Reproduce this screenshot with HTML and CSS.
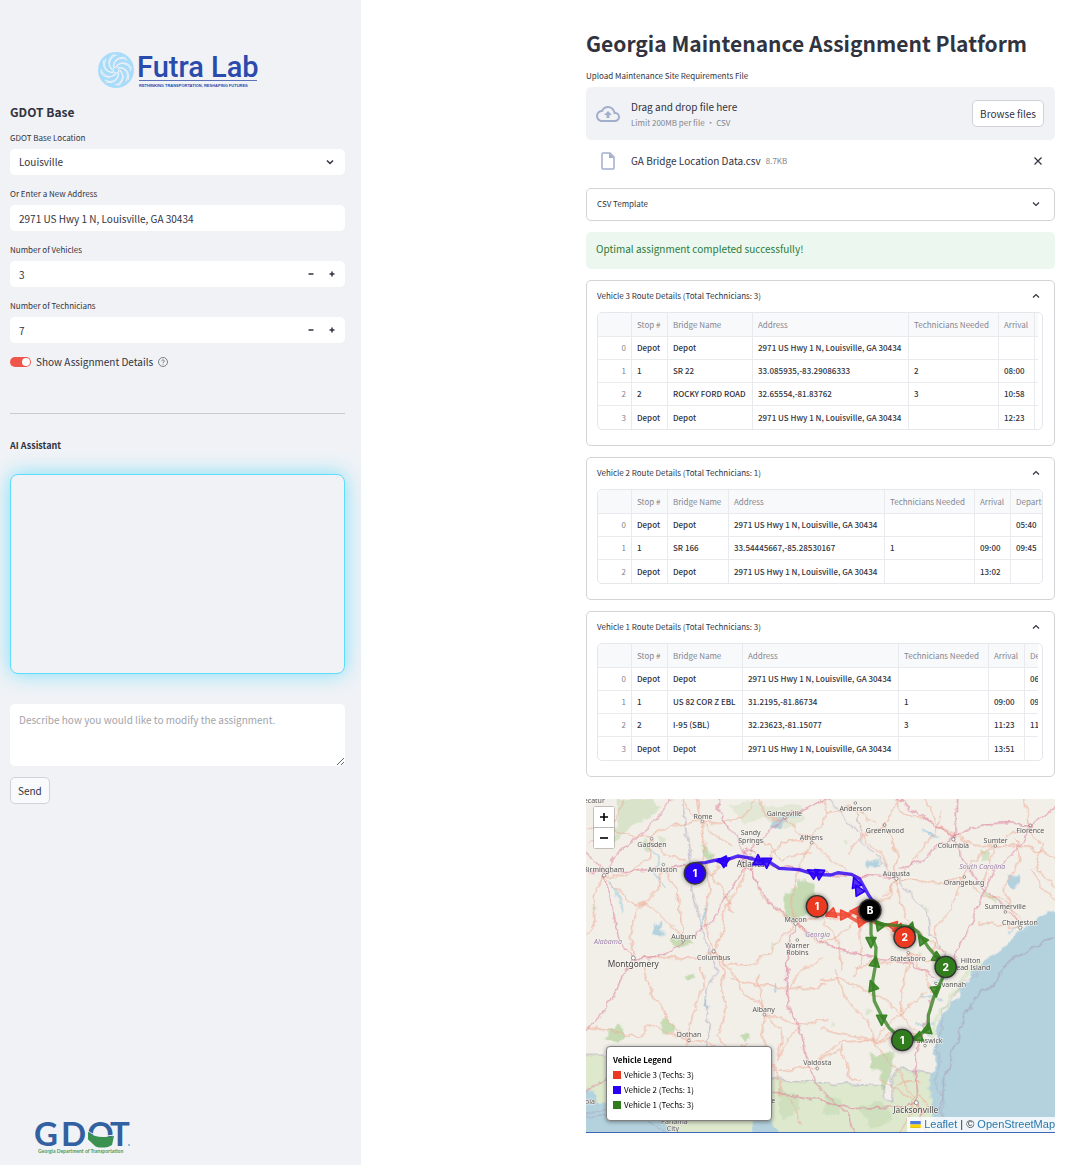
FILE: index.html
```html
<!DOCTYPE html>
<html lang="en">
<head>
<meta charset="utf-8">
<title>Georgia Maintenance Assignment Platform</title>
<link rel="stylesheet" href="styles.css">
</head>
<body>
<div class="app">
  <aside class="sidebar">
    <svg class="futra-logo" viewBox="0 0 160 38" role="img" aria-label="Futra Lab">
      <circle cx="18" cy="19" r="18" fill="#a9dcfa"/>
      <g fill="none" stroke="#f0f2f6" stroke-width="1">
        <g id="swirl"><path d="M18 15c6-5 13-2 15 5"/><path d="M21 17c8-1 11 6 9 12"/></g>
        <use href="#swirl" transform="rotate(45 18 19)"/>
        <use href="#swirl" transform="rotate(90 18 19)"/>
        <use href="#swirl" transform="rotate(135 18 19)"/>
        <use href="#swirl" transform="rotate(180 18 19)"/>
        <use href="#swirl" transform="rotate(225 18 19)"/>
        <use href="#swirl" transform="rotate(270 18 19)"/>
        <use href="#swirl" transform="rotate(315 18 19)"/>
        <circle cx="18" cy="19" r="3"/>
      </g>
      <text class="futra-name" x="39" y="26">Futra Lab</text>
      <path d="M41 29.500H159" stroke="#5a73bb" stroke-width="1"/>
      <text class="futra-tag" x="41" y="36">RETHINKING TRANSPORTATION, RESHAPING FUTURES</text>
    </svg>

    <h2 class="side-title">GDOT Base</h2>

    <div class="field">
      <label for="base">GDOT Base Location</label>
      <div class="control">
        <select id="base"><option>Louisville</option></select>
        <svg class="chevron" viewBox="0 0 10 10"><path d="M2 3.500l3 3 3-3"/></svg>
      </div>
    </div>
    <div class="field">
      <label for="address">Or Enter a New Address</label>
      <div class="control"><input id="address" type="text" value="2971 US Hwy 1 N, Louisville, GA 30434"></div>
    </div>
    <div class="field">
      <label for="vehicles">Number of Vehicles</label>
      <div class="control">
        <input id="vehicles" type="number" value="3">
        <button class="step" type="button" aria-label="Fewer vehicles"><svg viewBox="0 0 8 8"><path d="M1.500 4h5"/></svg></button>
        <button class="step" type="button" aria-label="More vehicles"><svg viewBox="0 0 8 8"><path d="M1.500 4h5M4 1.500v5"/></svg></button>
      </div>
    </div>
    <div class="field">
      <label for="techs">Number of Technicians</label>
      <div class="control">
        <input id="techs" type="number" value="7">
        <button class="step" type="button" aria-label="Fewer technicians"><svg viewBox="0 0 8 8"><path d="M1.500 4h5"/></svg></button>
        <button class="step" type="button" aria-label="More technicians"><svg viewBox="0 0 8 8"><path d="M1.500 4h5M4 1.500v5"/></svg></button>
      </div>
    </div>
    <div class="toggle-row">
      <input class="toggle" id="details" type="checkbox" checked>
      <label for="details">Show Assignment Details</label>
      <svg class="help" viewBox="0 0 10 10"><circle cx="5" cy="5" r="4.500"/><path d="M3.700 4.200c0-1.800 2.700-1.700 2.600 0 0 .8-1.300.8-1.300 1.900M5 7v.8"/></svg>
    </div>

    <hr class="rule">

    <h3 class="chat-title">AI Assistant</h3>
    <div class="chat-log"></div>
    <textarea class="prompt" aria-label="Message" placeholder="Describe how you would like to modify the assignment."></textarea>
    <button class="button" type="button">Send</button>

    <svg class="gdot-logo" viewBox="0 0 96 34" role="img" aria-label="GDOT, Georgia Department of Transportation">
      <text class="gdot-name" x="-1" y="24">G</text>
      <text class="gdot-name" x="26" y="24">D</text>
      <text class="gdot-name" x="52" y="24">O</text>
      <text class="gdot-name" x="75" y="24">T</text>
      <path d="M53 10c5 5 14 6 26 4l-2 9-4 2c-6 1-12 1-14-2-3-4-7-5-6-7z" fill="#3b9150"/>
      <path d="M53 9c6 5 15 6 26 4" fill="none" stroke="#f0f2f6" stroke-width="1"/>
      <text class="gdot-tag" x="3" y="31">Georgia Department of Transportation</text>
      <circle cx="94" cy="23" r="1" fill="#86a5cc"/>
    </svg>
  </aside>

  <main class="main">
    <h1>Georgia Maintenance Assignment Platform</h1>
    <label class="upload-label" for="upload">Upload Maintenance Site Requirements File</label>
    <div class="dropzone">
      <svg class="cloud" viewBox="0 0 24 24"><path d="M19.350 10.040A7.490 7.490 0 0 0 12 4C9.110 4 6.600 5.640 5.350 8.040A5.994 5.994 0 0 0 0 14c0 3.310 2.690 6 6 6h13c2.760 0 5-2.240 5-5 0-2.640-2.050-4.780-4.650-4.960zM19 18H6c-2.210 0-4-1.790-4-4 0-2.050 1.530-3.760 3.560-3.970l1.070-.11.5-.95A5.469 5.469 0 0 1 12 6c2.620 0 4.880 1.860 5.390 4.430l.3 1.500 1.530.11A2.980 2.980 0 0 1 22 15c0 1.650-1.350 3-3 3zM8 13h2.550v3h2.900v-3H16l-4-4z"/></svg>
      <div class="drop-text">
        <span>Drag and drop file here</span>
        <small>Limit 200MB per file • CSV</small>
      </div>
      <button class="button" id="upload" type="button">Browse files</button>
    </div>
    <div class="file">
      <svg class="doc" viewBox="0 0 14 18"><path d="M2 1h7l4 4v11q0 1-1 1H2q-1 0-1-1V2q0-1 1-1z"/><path class="fold" d="M8 1l5 5H8z"/></svg>
      <span>GA Bridge Location Data.csv</span>
      <small>8.7KB</small>
      <button class="remove" type="button" aria-label="Remove file"><svg viewBox="0 0 10 10"><path d="M1.500 1.500l7 7M8.500 1.500l-7 7"/></svg></button>
    </div>

    <details class="card">
      <summary>CSV Template <svg class="chevron" viewBox="0 0 10 10"><path d="M2 3.500l3 3 3-3"/></svg></summary>
    </details>

    <p class="alert" role="status">Optimal assignment completed successfully!</p>

    <details class="card" open>
      <summary>Vehicle 3 Route Details (Total Technicians: 3) <svg class="chevron" viewBox="0 0 10 10"><path d="M2 6.500l3-3 3 3"/></svg></summary>
      <div class="grid inset"><div class="scroll">
        <table>
          <colgroup><col class="c-index"><col class="c-stop"><col class="c-bridge-l"><col class="c-address"><col class="c-tech"><col class="c-time"><col class="c-depart"></colgroup>
          <thead><tr><th></th><th>Stop #</th><th>Bridge Name</th><th>Address</th><th>Technicians Needed</th><th>Arrival</th><th></th></tr></thead>
          <tbody>
            <tr><th>0</th><td>Depot</td><td>Depot</td><td>2971 US Hwy 1 N, Louisville, GA 30434</td><td></td><td></td><td></td></tr>
            <tr><th>1</th><td>1</td><td>SR 22</td><td>33.085935,-83.29086333</td><td>2</td><td>08:00</td><td></td></tr>
            <tr><th>2</th><td>2</td><td>ROCKY FORD ROAD</td><td>32.65554,-81.83762</td><td>3</td><td>10:58</td><td></td></tr>
            <tr><th>3</th><td>Depot</td><td>Depot</td><td>2971 US Hwy 1 N, Louisville, GA 30434</td><td></td><td>12:23</td><td></td></tr>
          </tbody>
        </table>
      </div></div>
    </details>

    <details class="card" open>
      <summary>Vehicle 2 Route Details (Total Technicians: 1) <svg class="chevron" viewBox="0 0 10 10"><path d="M2 6.500l3-3 3 3"/></svg></summary>
      <div class="grid"><div class="scroll">
        <table>
          <colgroup><col class="c-index"><col class="c-stop"><col class="c-bridge-s"><col class="c-address"><col class="c-tech"><col class="c-time"><col class="c-depart"></colgroup>
          <thead><tr><th></th><th>Stop #</th><th>Bridge Name</th><th>Address</th><th>Technicians Needed</th><th>Arrival</th><th>Departure</th></tr></thead>
          <tbody>
            <tr><th>0</th><td>Depot</td><td>Depot</td><td>2971 US Hwy 1 N, Louisville, GA 30434</td><td></td><td></td><td>05:40</td></tr>
            <tr><th>1</th><td>1</td><td>SR 166</td><td>33.54445667,-85.28530167</td><td>1</td><td>09:00</td><td>09:45</td></tr>
            <tr><th>2</th><td>Depot</td><td>Depot</td><td>2971 US Hwy 1 N, Louisville, GA 30434</td><td></td><td>13:02</td><td></td></tr>
          </tbody>
        </table>
      </div></div>
    </details>

    <details class="card" open>
      <summary>Vehicle 1 Route Details (Total Technicians: 3) <svg class="chevron" viewBox="0 0 10 10"><path d="M2 6.500l3-3 3 3"/></svg></summary>
      <div class="grid inset"><div class="scroll">
        <table>
          <colgroup><col class="c-index"><col class="c-stop"><col class="c-bridge-m"><col class="c-address"><col class="c-tech"><col class="c-time"><col class="c-depart"></colgroup>
          <thead><tr><th></th><th>Stop #</th><th>Bridge Name</th><th>Address</th><th>Technicians Needed</th><th>Arrival</th><th>Departure</th></tr></thead>
          <tbody>
            <tr><th>0</th><td>Depot</td><td>Depot</td><td>2971 US Hwy 1 N, Louisville, GA 30434</td><td></td><td></td><td>06:20</td></tr>
            <tr><th>1</th><td>1</td><td>US 82 COR Z EBL</td><td>31.2195,-81.86734</td><td>1</td><td>09:00</td><td>09:45</td></tr>
            <tr><th>2</th><td>2</td><td>I-95 (SBL)</td><td>32.23623,-81.15077</td><td>3</td><td>11:23</td><td>11:53</td></tr>
            <tr><th>3</th><td>Depot</td><td>Depot</td><td>2971 US Hwy 1 N, Louisville, GA 30434</td><td></td><td>13:51</td><td></td></tr>
          </tbody>
        </table>
      </div></div>
    </details>

    <section class="map" aria-label="Route map">
      <svg class="tiles" viewBox="3 11 1407 999" preserveAspectRatio="xMidYMid slice">
        <defs>
          <!-- gives drawn terrain and roads an irregular, natural line -->
          <filter id="rough" filterUnits="userSpaceOnUse" x="-40" y="-30" width="1500" height="1090">
            <feTurbulence type="fractalNoise" baseFrequency=".03" numOctaves="3" seed="4"/>
            <feDisplacementMap in="SourceGraphic" scale="26" xChannelSelector="R" yChannelSelector="G"/>
          </filter>
          <path id="arrow" d="M0-17L15 13H-15z"/>
        </defs>
        <rect x="-20" y="-20" width="1460" height="1070" fill="#f2efe9"/>
        <g filter="url(#rough)">
        <!-- Florida lowlands -->
        <path d="M-20 780H90L560 850 705 862 895 872 895 912 923 915 925 840 945 818 1040 835 1060 1050H-20z" fill="#dde8cd"/>
        <!-- forests -->
        <g fill="#c6dbb4">
          <path d="M640 248l25 4 30 38-5 60-40 10-25 22-28-18 2-70 38-20z"/>
          <path d="M855 778h40l32-12-5 75-30 50-8-8 5-55-36-5z"/>
          <path d="M95 12l100 0 30 25-30 30-50 20-35 30-20 30-10-20 20-40z" opacity=".6"/>
          <path d="M430 30l60-10 60 15 100-10 5 50-50 30-70-40-60 20z" opacity=".35"/>
          <path d="M225 680l20-10 28 20-5 25-30 2zM65 705l35-15 25 30-30 20-32-5zM305 540l20-5 5 15-20 5zM468 720l15-8 15 12-20 18zM255 430l50-5 25 20-50 15zM350 150l40 25-10 25-25-20z"/>
          <path d="M705 295l5 60-25 15zM1188 165l20 5 5 30-20-5zM1195 285l40 25-5 15-35-25zM165 150l15-20 20 30-15 10z" opacity=".7"/>
          <path d="M580 880l50 15 20 50-60 30zM720 900l50 10-10 50-50-10zM820 930l70-10 40 50-70 30z" opacity=".6"/>
          <path d="M220 120l20 10-10 20zM20 330l20 8-15 20zM420 300l16 5-10 16zM560 440l18 6-14 14zM780 130l15 5-8 15zM1020 330l20 8-16 12zM840 640l20 5-14 14zM1000 470l18 4-8 18zM740 680l12 6-10 12z" opacity=".5"/>
        </g>
        <!-- ocean, gulf and lakes -->
        <g fill="#b4d2de">
          <path d="M1450 342l-40 8-45 10-10 22-20 3-15 22-20 3-20 30-35 20-12 22-35 12-15 25-28 5-5 32-30 22 5 30-30 12-12 30-20 20-8 35 6 20-15 45 10 35-20 40-2 45 10 50 7 130h410z"/>
          <path d="M-20 890h48l10 20-3 5 60 15 130 25 60 95H-20zM505 955l50 15 50 80H500z"/>
          <path d="M565 70l25-10 10 15-20 25-25-5zM210 390l20-15-5 25 15 15-20 10-20-15zM1265 245l35-8 5 20-15 25-20-15zM1005 105l35 8 25 15-40-5zM835 206l45-15 10 18-45 8zM355 340l12-5-12 40-6 20zM358 600l8 5 2 40-6-5zM570 560l8 0 2 30-6-2z"/>
        </g>
        <g fill="none" stroke="#b4d2de" stroke-width="4">
          <path d="M75 250l30 60 10 50M190 150l30 45-8 40 25 40M580 80l60-20M700 300l25 40M1040 560l40-5M1010 600l60 10M1000 690l50-5M1020 700l30 30M1040 480l60 20M1300 390l-30 20M815 60l15 50M350 400l12-60 10-20"/>
        </g>
        <g fill="none" stroke="#dde8cd" stroke-width="9" stroke-linejoin="round">
          <path d="M1190 495l-45 35-20 25-10 30-22 20-10 25-28 35-8 25 6 20-12 40"/>
        </g>
        <g fill="none" stroke="#a9a2bd" stroke-width="3" opacity=".8">
          <path d="M1410 425l-30 10-20 20-40 15-40 25-25 15-20 50-50 30-40 60-15 30-12 60-18 20-8 60-20 30 2 50-10 30 12 50-5 35 14 40" stroke-width="4"/>
          <path d="M1180 530l-50 30-30 50-25 30-5 60-15 60 10 40-15 60 20 45 20 120" stroke-width="2"/>
          <path d="M3 955l60-15 120 25 60 49M3 965l80-10"/>
          <path d="M290 -10l18 167 17 140 25 105 8 35 25 50 12 35 5 12-35 40-4 40 2 60 12 22-8 44-2 40"/>
          <path d="M705 -10l75 72 40 60 65 70 50 50 40 55 50 50 10 70 40 50 10 40"/>
          <path d="M-10 780h73M560 850l145 12 190 10v35l25 10 5-77 20-22 95 17"/>
        </g>
        <!-- secondary roads -->
        <g fill="none" stroke="#efae98" stroke-width="3">
          <path d="M3 150l60-40 40-60 30-58M3 100l80 10 110 15 60-30 80-20 80 10 60-20 70-83M200 130l-10 60-60 50-73 0M200 130l40 50 60 15M350 78l-40-40-30-46M350 78l10 60-10 60M350 78l50 50 40 20M330-8l15 80"/>
          <path d="M235 215l-20 70-60 60-20 80 12 60M235 215l40 70 15 80 5 70M360 200l15 80-15 60 5 60 20 70M360 200l50 80 30 70M55 240l-30 60 5 90-27 30M55 240l80 80 70 20 90 90"/>
          <path d="M490 200l-30 80-40 60-10 70-22 60M500 210l30 90 60 60 42 22M545 200l40-60 90-10 25-30 30-50M680 140l-30 60-20 60-10 60 15 60M680 140l50 50 60 40M600 60l30 40 50 40M520-8l20 70 50 10M530 130l60 60 90-20M700-8l30 60 80-20 60 60"/>
          <path d="M388 468l40 40 70 0 60-40 75-85M388 468l-60 20-180 0M388 468l30 60-10 60 15 60-25 70 40 60-30 50M388 468l60 70 30 60 50 30 20 40M440 548l80 20 90 12 120-10M520 540l5 70 20 50"/>
          <path d="M540 655l-10 60 20 70 30 60 5 60M540 655l60 20 60 15 70-20M545 660l50 60-20 80M610 580l40-60 60-30M650 690l-40 40-30 60M310 735l-60-20-60-30-30 40-60-15-97-15M310 735l20-100 25-60-5-60M310 735l60 10 60 20 60-20M310 735v50M178 512l25 100 25 20 20 40 60 60M580 825l50-5 60 0 20-30 60-30"/>
          <path d="M635 385l60-20 60 10 90-30M635 385l60 60 60-20 95-80M855 345l-40 80 20 60-30 60M855 345l60-60 20-45M855 345l60 70 50 50M930 250l-20 60-60 30M930 250l20 60 10 60 60 60 60 40M930 250l-40-70-60-60-20-90M950 240l40-50 60-80 20-60M899 90l30-60 40-38M899 90l40 90-10 60M899 90l-80 40-30 50"/>
          <path d="M1135 245l-60 20-60-10-70-5M1135 245l30-50 65-45 40-30 60-20M1135 245l-30 80-50 70-10 80M1135 245l60 60 50 0 60 60M1230 155l-20 60-15 50M1230 155l100 0 80 30M1330 95l40 60-20 60 60 60M1330 95l-10-105M1110 120l-50-30-50-98M1105 120l60 30 60 0M1305 395l-30-60-20-60 50-80-10-60M1180 380l60 10 60 5M1340 220l30 60 40 30M920-8l30 60 80 20 70 50"/>
          <path d="M970 475l-50 30-50-10-60 30M970 475l60 20 50 20M970 475l-10 70-15 110M970 475l50 60 20 60M705 560l60-10 80 40 60 30 40 30 30 40 25 25M705 700l80 20 80 15 80-85 80-60M865 735l-20-60-60-60-40-90M865 735l40 60 40 40 20 50 30 30M705 790l60-50 100-5M765 750l30 100 30 5M865 735l80 0 70 0M1010 720l-60-10-80 25M770 520l-10-80-40-60M1000 925l-30 40-30 66M1000 925l-60-40-60-40M1010 860l-60 0-30 30M990 900l20 0 15 25-15 25-30-10-5-25zM585 880l40 50 30 60M380 185l20 30-15 30-50-40"/>
        </g>
        <!-- interstates -->
        <g fill="none" stroke="#dc7d99" stroke-width="3" stroke-linejoin="round">
          <path d="M-10 225l65 5 95-2 85-13 95-10 90-12 60-6 20-2M55 230l45-60 50-40 50-45 40-45 30-50M55 230l-52-60M55 240l20 60 15 90 12 40 28 42 15 16M145 488l65 2 85-50 55-35 50-55 30-60 52-75M145 488l-30 50-25 50-40 70-60 55"/>
          <path d="M485 190l-25-60-30-30-30-50v-60M490 175l40-45 60-60 50-20 60-30 70-30M495 210l25 60 40 60 60 45 15 15-25 50-5 70v120l35 65 20 80 30 90 50 50 50 45 35 100M497 205l100 12 120 18 90 5 120 5M470 170l20-10 25 15 5 30-25 20-25-15z"/>
          <path d="M945 225l60-30 50-40 50-30 80-35 80-5 70 5 85-60M635 385l60 50 100 35 95 20 75 10 40 20 50 25M905-8l130 83 70 50 40 85 50 70 50 40 60 70M1112-10l-2 135"/>
          <path d="M1345 80l-40 70-80 80-30 60-30 80-40 80-30 75-20 15-30 70-30 90-25 100 5 110 30 120M705 915l90 25 130-5 70-10M560 888l145 27M3 895l60-50"/>
        </g>
        </g>
        <!-- place names -->
        <g class="places">
          <g class="dots"><circle cx="352" cy="78" r="4"/><circle cx="200" cy="130" r="4"/><circle cx="235" cy="208" r="4"/><circle cx="57" cy="240" r="5"/><circle cx="600" cy="67" r="4"/><circle cx="680" cy="142" r="4"/><circle cx="632" cy="385" r="5"/><circle cx="637" cy="434" r="4"/><circle cx="295" cy="436" r="4"/><circle cx="386" cy="468" r="5"/><circle cx="145" cy="488" r="6"/><circle cx="811" cy="23" r="4"/><circle cx="899" cy="89" r="4"/><circle cx="1105" cy="132" r="5"/><circle cx="1231" cy="152" r="4"/><circle cx="1336" cy="90" r="4"/><circle cx="1138" cy="245" r="4"/><circle cx="1261" cy="350" r="4"/><circle cx="1306" cy="397" r="5"/><circle cx="934" cy="250" r="5"/><circle cx="970" cy="472" r="4"/><circle cx="538" cy="658" r="4"/><circle cx="312" cy="735" r="4"/><circle cx="697" cy="820" r="4"/><circle cx="1020" cy="751" r="4"/><circle cx="994" cy="922" r="6"/><circle cx="497" cy="189" r="6"/></g>
          <text x="28" y="23">ecatur</text>
          <text x="354" y="70">Rome</text><text x="598" y="61">Gainesville</text>
          <text x="497" y="119">Sandy</text><text x="497" y="142">Springs</text>
          <text x="679" y="135">Athens</text><text x="201" y="154">Gadsden</text>
          <text x="56" y="230">Birmingham</text><text x="232" y="230">Anniston</text>
          <text class="city" x="497" y="214">Atlanta</text>
          <text x="632" y="379">Macon</text><text x="637" y="457">Warner</text><text x="637" y="480">Robins</text>
          <text x="296" y="430">Auburn</text><text x="386" y="493">Columbus</text>
          <text class="city" x="145" y="516">Montgomery</text>
          <text x="811" y="47">Anderson</text><text x="900" y="114">Greenwood</text>
          <text x="1105" y="158">Columbia</text><text x="1232" y="144">Sumter</text><text x="1336" y="112">Florence</text>
          <text x="1137" y="269">Orangeburg</text><text x="1261" y="341">Summerville</text><text x="1305" y="390">Charleston</text>
          <text x="934" y="243">Augusta</text><text x="969" y="496">Statesboro</text>
          <text x="1157" y="502">Hilton</text><text x="1157" y="525">Head Island</text><text x="1095" y="575">Savannah</text>
          <text x="1022" y="742">Brunswick</text><text x="536" y="650">Albany</text><text x="312" y="726">Dothan</text>
          <text x="697" y="809">Valdosta</text><text class="city" x="992" y="954">Jacksonville</text>
          <text x="268" y="985">Panama</text><text x="264" y="1007">City</text>
          <text x="514" y="922">Tallahassee</text><text x="-20" y="926">Pensacola</text>
          <g class="state"><text x="69" y="446">Alabama</text><text x="698" y="424">Georgia</text><text x="1192" y="221">South Carolina</text></g>
        </g>
        <!-- vehicle routes -->
        <g class="route blue">
          <path d="M330 205l30-3 40-9 20 2 38-13 30 5 40 10 20 0 35 22 60 4 45 14 50 2 22-7 40 5 24 14 12 22 14 25 20 30"/>
          <use href="#arrow" transform="translate(411 197) rotate(-90)"/><use href="#arrow" transform="translate(420 197) rotate(60)"/>
          <use href="#arrow" transform="translate(519 195)"/><use href="#arrow" transform="translate(545 202) rotate(180)"/>
          <use href="#arrow" transform="translate(682 232) rotate(-60)"/><use href="#arrow" transform="translate(703 237) rotate(185)"/>
          <use href="#arrow" transform="translate(812 262) rotate(-20)"/><use href="#arrow" transform="translate(820 284) rotate(-30)"/>
        </g>
        <g class="route red">
          <path d="M696 333l30 20 50 6 40-10 38-4M790 362l30 18 35-5 30 12 40 2 34 30"/>
          <use href="#arrow" transform="translate(738 356) rotate(-110)"/><use href="#arrow" transform="translate(780 359) rotate(90)"/>
          <use href="#arrow" transform="translate(812 348) rotate(-90)"/><use href="#arrow" transform="translate(832 378) rotate(80)"/><use href="#arrow" transform="translate(922 391) rotate(-80)"/><use href="#arrow" transform="translate(942 400) rotate(20)"/>
        </g>
        <g class="route green">
          <path d="M855 345l20 38 15 5 60 3 30 5 20 15 30 45 30 35 22 24-12 40-20 40-20 65 0 40-36 25-42 9-40-37-22-35-22-45-5-60 7-40 3-60-15-40v-60"/>
          <use href="#arrow" transform="translate(888 390) rotate(80)"/><use href="#arrow" transform="translate(978 397) rotate(15)"/>
          <use href="#arrow" transform="translate(1010 432) rotate(-35)"/><use href="#arrow" transform="translate(1058 488) rotate(120)"/>
          <use href="#arrow" transform="translate(1052 588) rotate(175)"/><use href="#arrow" transform="translate(1028 700) rotate(10)"/>
          <use href="#arrow" transform="translate(997 727) rotate(-110)"/><use href="#arrow" transform="translate(890 673) rotate(180)"/>
          <use href="#arrow" transform="translate(862 572) rotate(-20)"/><use href="#arrow" transform="translate(870 500) rotate(10)"/><use href="#arrow" transform="translate(858 440) rotate(180)"/>
        </g>
        <g class="pins">
          <circle cx="330" cy="234" r="32" fill="#2a00f5"/><text x="330" y="245">1</text>
          <circle cx="696" cy="333" r="32" fill="#eb3a20"/><text x="696" y="344">1</text>
          <circle cx="959" cy="426" r="32" fill="#eb3a20"/><text x="959" y="437">2</text>
          <circle cx="1082" cy="515" r="32" fill="#317d1d"/><text x="1082" y="526">2</text>
          <circle cx="952" cy="734" r="32" fill="#317d1d"/><text x="952" y="745">1</text>
          <circle cx="855" cy="345" r="33" fill="#000"/><text x="855" y="356">B</text>
        </g>
      </svg>
      <div class="zoom">
        <button type="button" aria-label="Zoom in"><svg viewBox="0 0 10 10"><path d="M1 5h8M5 1v8"/></svg></button>
        <button type="button" aria-label="Zoom out"><svg viewBox="0 0 10 10"><path d="M1 5h8"/></svg></button>
      </div>
      <div class="legend">
        <strong>Vehicle Legend</strong>
        <span><i class="swatch red"></i>Vehicle 3 (Techs: 3)</span>
        <span><i class="swatch blue"></i>Vehicle 2 (Techs: 1)</span>
        <span><i class="swatch green"></i>Vehicle 1 (Techs: 3)</span>
      </div>
      <div class="credit">
        <svg viewBox="0 0 12 8"><path fill="#4c7be1" d="M0 0h12v4H0z"/><path fill="#ffd500" d="M0 4h12v3H0z"/><path fill="#e0bc00" d="M0 7h12v1H0z"/></svg>
        <a href="#leaflet">Leaflet</a> | © <a href="#osm">OpenStreetMap</a>
      </div>
    </section>
  </main>
</div>
</body>
</html>
```
FILE: styles.css
```css
* { box-sizing: border-box; }

body {
  margin: 0;
  background: #fff;
  color: #31333f;
  font: 10px/16px "Noto Sans CJK SC", "Noto Sans", sans-serif;
}

h1, h2, h3, p { margin: 0; }

button, input, select, textarea {
  font: inherit;
  color: inherit;
}

svg { display: block; }

.app {
  display: flex;
  min-height: 100vh;
}

/* Sidebar */
.sidebar {
  flex: none;
  width: 361px;
  display: flex;
  flex-direction: column;
  align-items: flex-start;
  padding: 51px 16px 9px 10px;
  background: #f0f2f6;
}

.futra-logo {
  align-self: center;
  width: 160px;
  height: 38px;
}

.futra-name {
  font: 500 29px Roboto, sans-serif;
  fill: #2a4bab;
}

.futra-tag {
  font: 700 4px "Liberation Sans", sans-serif;
  fill: #2a4bab;
}

.side-title {
  margin: 14px 0 9px;
  font-size: 12px;
  line-height: 18px;
  font-weight: 700;
}

.field {
  width: 100%;
  margin-bottom: 11px;
}

.field label,
.upload-label {
  display: block;
  margin-bottom: 3px;
  font-size: 8px;
  line-height: 16px;
}

.control {
  display: flex;
  align-items: center;
  height: 26px;
  padding-right: 10px;
  border-radius: 5px;
  background: #fff;
}

.control input,
.control select {
  flex: 1;
  min-width: 0;
  height: 26px;
  padding: 0 9px;
  border: 0;
  background: none;
  appearance: none;
  outline: 0;
}

.control input::-webkit-inner-spin-button { appearance: none; }

.control input[type="number"] { appearance: textfield; }

.chevron {
  flex: none;
  width: 10px;
  height: 10px;
  fill: none;
  stroke: #31333f;
  stroke-width: 1.500;
}

.step {
  width: 21px;
  height: 26px;
  padding: 0 6px;
  border: 0;
  background: none;
}

.control:has(.step) { padding-right: 2px; }

.step svg {
  width: 8px;
  height: 8px;
  stroke: #31333f;
  stroke-width: 1.500;
}

.toggle-row {
  display: flex;
  align-items: center;
  gap: 5px;
  height: 16px;
}

.toggle {
  width: 21px;
  height: 10px;
  margin: 0;
  padding: 1px;
  border-radius: 5px;
  background: #f0554c;
  appearance: none;
}

.toggle::before {
  content: "";
  display: block;
  width: 8px;
  height: 8px;
  margin-left: auto;
  border-radius: 50%;
  background: #fff;
}

.help {
  width: 10px;
  height: 10px;
  fill: none;
  stroke: #7d7f88;
}

.rule {
  width: 100%;
  height: 1px;
  margin: 43px 0 24px;
  border: 0;
  background: #c9cbd1;
}

.chat-title {
  font-size: 9px;
  line-height: 16px;
  font-weight: 700;
}

.chat-log {
  width: 100%;
  height: 200px;
  margin: 20px 0 30px;
  border: 1px solid #5fdcfc;
  border-radius: 8px;
  background: #f0f2f6;
  box-shadow: 0 0 20px #7fdff8;
}

.prompt {
  width: 100%;
  height: 62px;
  margin-bottom: 11px;
  padding: 8px 9px;
  border: 0;
  border-radius: 5px;
  background: #fff;
  resize: vertical;
}

.prompt::placeholder { color: #a3a4aa; }

.button {
  height: 27px;
  padding: 0 7px;
  border: 1px solid #d0d2d8;
  border-radius: 5px;
  background: #f9fafc;
}

.gdot-logo {
  width: 96px;
  height: 34px;
  margin: auto 0 0 25px;
}

.gdot-name {
  font: 700 33px Lato, sans-serif;
  fill: #3260a0;
}

.gdot-tag {
  font: 700 5px Lato, sans-serif;
  fill: #4a9a5c;
}

/* Main column */
.main {
  flex: 1;
  min-width: 0;
  padding: 27px 36px 32px 225px;
}

h1 {
  margin-bottom: 9px;
  font-size: 21px;
  line-height: 32px;
  font-weight: 700;
  white-space: nowrap;
}

.dropzone {
  display: flex;
  align-items: center;
  height: 53px;
  padding: 0 11px 0 10px;
  border-radius: 5px;
  background: #f0f2f6;
}

.dropzone .button { background: #fff; }

.cloud {
  width: 24px;
  height: 24px;
  margin-right: 11px;
  fill: #a3aecb;
}

.drop-text {
  flex: 1;
  display: flex;
  flex-direction: column;
  padding-top: 2px;
}

small {
  font-size: 8px;
  color: #84868f;
}

.file {
  display: flex;
  align-items: center;
  height: 48px;
  padding: 0 12px 6px 15px;
}

.file small { margin-left: 5px; }

.doc {
  width: 14px;
  height: 18px;
  margin-right: 16px;
  fill: none;
  stroke: #a3aecb;
  stroke-width: 1.500;
}

.doc .fold { fill: #a3aecb; stroke: none; }

.remove {
  margin-left: auto;
  padding: 0;
  border: 0;
  background: none;
}

.remove svg {
  width: 10px;
  height: 10px;
  stroke: #31333f;
  stroke-width: 1.200;
}

.card {
  margin-bottom: 11px;
  border: 1px solid #d3d4d8;
  border-radius: 5px;
}

.card[open] { padding-bottom: 15px; }

.card summary {
  display: flex;
  align-items: center;
  justify-content: space-between;
  height: 31px;
  padding: 0 13px 2px 10px;
  font-size: 8px;
  list-style: none;
}

.card .chevron { stroke-width: 1.200; }

.alert {
  margin-bottom: 11px;
  padding: 9px 10px 12px;
  border-radius: 5px;
  background: #ecf8ef;
  color: #2b7a3b;
}

/* Route tables */
.grid {
  margin: 0 11px 0 10px;
  border: 1px solid #e6e7ea;
  border-radius: 5px;
  overflow: hidden;
}

.grid.inset { padding-right: 4px; }

.scroll { overflow: hidden; }

table {
  width: 481px;
  table-layout: fixed;
  border-collapse: separate;
  border-spacing: 0;
  font-size: 8px;
  font-weight: 500;
}

.c-index { width: 34px; }
.c-stop, .c-time { width: 36px; }
.c-bridge-l { width: 85px; }
.c-bridge-m { width: 75px; }
.c-bridge-s { width: 61px; }
.c-address { width: 156px; }
.c-tech { width: 90px; }
.c-depart { width: 68px; }

th, td {
  height: 23px;
  padding: 0 5px;
  border: solid #e9eaed;
  border-width: 0 1px 1px 0;
  text-align: left;
  line-height: 16px;
  white-space: nowrap;
}

th {
  font-weight: 400;
  color: #84868f;
}

thead th {
  height: 24px;
  background: #f8f9fb;
}

tbody th { text-align: right; }

tbody tr:last-child > * { border-bottom: 0; }

/* Map */
.map {
  position: relative;
  height: 334px;
  margin-top: 22px;
  border-bottom: 1px solid #3b66b5;
  overflow: hidden;
}

.tiles {
  width: 100%;
  height: 100%;
}

.places text {
  font: 21px "Noto Sans", sans-serif;
  text-anchor: middle;
  fill: #555;
  stroke: #f7f5f1;
  stroke-width: 3px;
  paint-order: stroke;
}

.places .city { font-size: 25px; fill: #444; }

.places .state text { font-style: italic; fill: #9a80a8; }

.dots { fill: #fff; stroke: #666; stroke-width: 2; }

.route { stroke-linejoin: round; }
.route > path { fill: none; stroke-width: 10; opacity: .8; }
.route use { stroke-width: 5; fill-opacity: .8; }
.route.blue { stroke: #2a00f5; fill: #2a00f5; }
.route.red { stroke: #f04a35; fill: #f04a35; }
.route.green { stroke: #3a8526; fill: #317d1d; }

.pins circle {
  stroke: #333;
  stroke-width: 4;
  filter: drop-shadow(0 0 6px #0008);
}

.pins text {
  font: 800 30px Inter, sans-serif;
  text-anchor: middle;
  fill: #fff;
}

.zoom {
  position: absolute;
  left: 8px;
  top: 8px;
  display: flex;
  flex-direction: column;
  gap: 1px;
  border-radius: 2px;
  background: #bbb;
  box-shadow: 0 0 0 1px #0003;
}

.zoom button {
  width: 20px;
  height: 20px;
  padding: 0 5px;
  border: 0;
  background: #fff;
}

.zoom svg {
  width: 10px;
  height: 10px;
  stroke: #000;
  stroke-width: 1.600;
}

.legend {
  position: absolute;
  left: 20px;
  bottom: 11px;
  display: flex;
  flex-direction: column;
  width: 166px;
  padding: 5px 6px 8px;
  border: 1px solid #808080;
  border-radius: 4px;
  background: #fff;
  color: #000;
  font-size: 8px;
  line-height: 15px;
  box-shadow: 0 1px 4px #0006;
}

.legend span {
  display: flex;
  align-items: center;
  gap: 3px;
}

.swatch { width: 8px; height: 8px; }
.swatch.red { background: #eb3a20; }
.swatch.blue { background: #2a00f5; }
.swatch.green { background: #317d1d; }

.credit {
  position: absolute;
  right: 0;
  bottom: 0;
  padding-left: 3px;
  background: #fffc;
  color: #333;
  font: 11px/15px "Liberation Sans", sans-serif;
}

.credit svg {
  display: inline-block;
  width: 11px;
  height: 7px;
}

.credit a { color: #2a78ac; text-decoration: none; }
```
